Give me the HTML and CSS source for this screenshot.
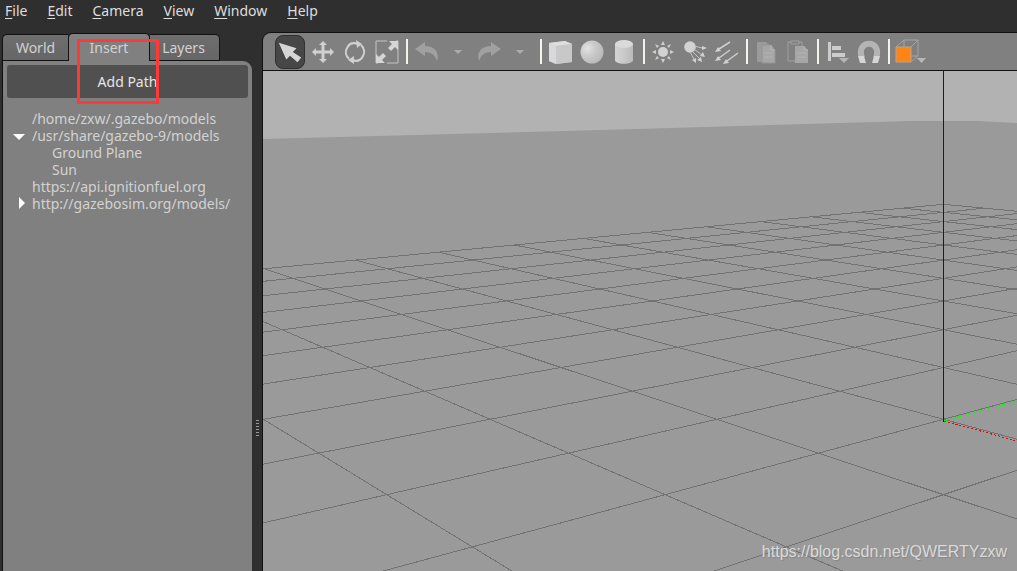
FILE: index.html
```html
<!DOCTYPE html>
<html lang="en">
<head>
<meta charset="utf-8">
<title>Gazebo</title>
<link rel="stylesheet" href="styles.css">
</head>
<body>
<nav class="menubar">
  <button><u>F</u>ile</button>
  <button><u>E</u>dit</button>
  <button><u>C</u>amera</button>
  <button><u>V</u>iew</button>
  <button><u>W</u>indow</button>
  <button><u>H</u>elp</button>
</nav>
<div class="workspace">
  <aside class="sidebar">
    <div class="tabs" role="tablist">
      <button class="tab tab-world" role="tab">World</button>
      <button class="tab tab-active" role="tab" aria-selected="true">Insert</button>
      <button class="tab tab-layers" role="tab">Layers</button>
    </div>
    <div class="panel">
      <button class="add-path">Add Path</button>
      <ul class="tree">
        <li>/home/zxw/.gazebo/models</li>
        <li class="open">/usr/share/gazebo-9/models
          <ul>
            <li>Ground Plane</li>
            <li>Sun</li>
          </ul>
        </li>
        <li>https://api.ignitionfuel.org</li>
        <li class="closed">http://gazebosim.org/models/</li>
      </ul>
    </div>
    <div class="highlight"></div>
  </aside>
  <div class="splitter"><span class="grip"></span></div>
  <main class="view">
    <div class="toolbar">
      <button class="tool selected" aria-label="Select"><svg viewBox="0 0 30 34"><path d="M3 7 22 13 18 17 27 23 23 28 15 21 11 25Z" fill="#d6d6d6"/></svg></button>
      <button class="tool" aria-label="Translate"><svg viewBox="0 0 24 24"><path d="M12 1 16 5H13.500V10.500H19V8L23 12 19 16V13.500H13.500V19H16L12 23 8 19H10.500V13.500H5V16L1 12 5 8V10.500H10.500V5H8Z" fill="#d0d0d0"/></svg></button>
      <button class="tool" aria-label="Rotate"><svg viewBox="0 0 24 24"><path d="M6 19A9 9 0 0 1 4 8C6 4 10 2 15 4M18 5A9 9 0 0 1 20 16C18 20 14 22 9 20" fill="none" stroke="#d0d0d0" stroke-width="2"/><path d="M13 0 19 4 14 8ZM11 16 5 20 11 24Z" fill="#d0d0d0"/></svg></button>
      <button class="tool" aria-label="Scale"><svg viewBox="0 0 24 24"><path d="M12 1H1V12M12 23H23V12M1 12V23H3M23 12V1H21" fill="none" stroke="#c4c4c4"/><path d="M14 1H23V10L20 7 16 11 13 8 17 4ZM1 14 4 17 8 13 11 16 7 20 10 23H1Z" fill="#d6d6d6"/></svg></button>
      <span class="sep"></span>
      <div class="history">
        <button class="tool" aria-label="Undo"><svg viewBox="0 0 24 24"><path d="M0 9 10 2V6C19 6 25 12 22 21C20 15 16 12 10 12V16Z" fill="#a0a0a0"/></svg></button>
        <button class="tool drop" aria-label="Undo history"><svg viewBox="0 0 24 24"><path d="M8 10H16L12 14Z" fill="#ababab"/></svg></button>
        <button class="tool" aria-label="Redo"><svg viewBox="0 0 24 24"><path d="M24 9 14 2V6C5 6-1 12 2 21C4 15 8 12 14 12V16Z" fill="#a0a0a0"/></svg></button>
        <button class="tool drop" aria-label="Redo history"><svg viewBox="0 0 24 24"><path d="M8 10H16L12 14Z" fill="#ababab"/></svg></button>
      </div>
      <span class="sep"></span>
      <button class="tool" aria-label="Box"><svg viewBox="0 0 24 24"><path d="M1 3 17 1 24 4V22L8 24 1 21Z" fill="#d0d0d0"/><path d="M1 3 17 1 24 4 8 6Z" fill="#dedee0"/><path d="M1 3 8 6V24L1 21Z" fill="#d9d9dc"/><path d="M8 6 24 4V22L8 24Z" fill="#c8c8c8"/></svg></button>
      <button class="tool" aria-label="Sphere"><svg viewBox="0 0 24 24"><defs><radialGradient id="ball" cx=".3" cy=".35" r=".7"><stop offset="0" stop-color="#e2e2e2"/><stop offset=".5" stop-color="#cacaca"/><stop offset="1" stop-color="#bababa"/></radialGradient></defs><circle cx="12" cy="12" r="11.500" fill="url(#ball)"/></svg></button>
      <button class="tool" aria-label="Cylinder"><svg viewBox="0 0 24 24"><defs><linearGradient id="tube"><stop offset="0" stop-color="#d4d4d4"/><stop offset=".4" stop-color="#ccc"/><stop offset="1" stop-color="#bababa"/></linearGradient></defs><path d="M3 4V20C3 25 21 25 21 20V4Z" fill="url(#tube)"/><ellipse cx="12" cy="4" rx="9" ry="4" fill="#dadadc"/></svg></button>
      <span class="sep"></span>
      <button class="tool" aria-label="Point light"><svg viewBox="0 0 24 24"><circle cx="12" cy="12" r="5" fill="#d2d2d2"/><path d="M12 1 14 5H10ZM12 23 14 19H10ZM1 12 5 10V14ZM23 12 19 10V14ZM4 4 8 6 6 8ZM20 20 16 18 18 16ZM4 20 6 16 8 18ZM20 4 16 6 18 8Z" fill="#d0d0d0"/></svg></button>
      <button class="tool" aria-label="Spot light"><svg viewBox="0 0 24 24"><circle cx="7" cy="7" r="5.800" fill="#d2d2d2"/><path d="M11 6 19 8M11 9 19 15M9 11 16 18M7 12 11 19" stroke="#c4c4c4"/><path d="M24 8 19 6V10ZM22 17 20 12 17 16ZM19 22 18 17 14 20ZM13 23 13 18 9 20Z" fill="#d0d0d0"/></svg></button>
      <button class="tool" aria-label="Directional light"><svg viewBox="0 0 24 24"><path d="M15 2 4 9M15 10 4 18M23 13 12 21" stroke="#cecece" stroke-width="1.500"/><path d="M0 12 3 7 6 11ZM0 21 3 16 6 20ZM8 24 11 19 14 23Z" fill="#d0d0d0"/></svg></button>
      <span class="sep"></span>
      <button class="tool" aria-label="Copy"><svg viewBox="0 0 24 24"><path d="M3 2H12L16 6V22H3Z" fill="#9b9b9b"/><path d="M8 5H17L21 10V23H8Z" fill="#a6a6a6" stroke="#949494"/><path d="M17 5V10H21M10 13H19M10 17H19" stroke="#b4b4b4" fill="none"/></svg></button>
      <button class="tool" aria-label="Paste"><svg viewBox="0 0 24 24"><path d="M5 2H2V21H9M13 2H16V6M5 1H13V4H5Z" fill="none" stroke="#a0a0a0"/><path d="M9 6H18L22 10V23H9Z" fill="#a6a6a6"/><path d="M18 6V10H22M11 13H20M11 17H20" stroke="#b2b2b2" fill="none"/></svg></button>
      <span class="sep"></span>
      <button class="tool" aria-label="Align"><svg viewBox="0 0 24 24"><path d="M3 2H6V21H3ZM7 6H16V10H7ZM7 13H20V17H7Z" fill="#ccc"/><path d="M14 18H24L19 23Z" fill="#b5b5b5"/></svg></button>
      <button class="tool" aria-label="Snap"><svg viewBox="0 0 24 24"><path d="M5 18C-2-1 26-1 19 18" fill="none" stroke="#b4b4b4" stroke-width="6"/><path d="M1 16H7L9 23H3ZM17 16H23L21 23H15Z" fill="#d5d5d5"/></svg></button>
      <span class="sep"></span>
      <button class="tool wide" aria-label="View angle"><svg viewBox="0 0 32 26"><path d="M1 8 9 1H23V17L16 23M16 8 23 1M9 1V8M16 17H23" fill="none" stroke="#a4a4a4"/><path d="M1 8H16V23H1Z" fill="#ff8416" stroke="#b9a48f"/><path d="M22 19H31L26.500 24Z" fill="#b8b8b8"/></svg></button>
    </div>
    <div class="scene">
      <svg class="world" viewBox="263 71 754 500" preserveAspectRatio="xMinYMin slice" aria-label="3D world">
        <rect x="263" y="71" width="1600" height="1600" fill="#b2b2b2"/>
        <path d="M263 139 637 129 910 121H977L1017 123 1863 150V1671H263Z" fill="#9a9a9a"/>
        <g id="grid" stroke="#727272" shape-rendering="crispEdges"></g>
        <g shape-rendering="crispEdges" fill="none">
          <path d="M943.500 71V422" stroke="#00f"/>
          <path d="M944 421 1017 401" stroke="#0f0" stroke-dasharray="3 2"/>
          <path d="M944 421 1017 441" stroke="#f00" stroke-dasharray="2 2"/>
        </g>
      </svg>
      <span class="watermark">https://blog.csdn.net/QWERTYzxw</span>
    </div>
  </main>
</div>
<script src="grid.js"></script>
</body>
</html>
```

FILE: styles.css
```css
* { box-sizing: border-box; }
body {
  margin: 0;
  height: 100vh;
  display: flex;
  flex-direction: column;
  overflow: hidden;
  background: #2f2f2f;
  color: #d2d2d2;
  font: 14px/17px "Noto Sans", "Open Sans", sans-serif;
}
button {
  margin: 0;
  padding: 0;
  border: 0;
  background: none;
  color: inherit;
  font: inherit;
}
.menubar {
  display: flex;
  gap: 20px;
  padding: 2px 5px;
  height: 33px;
  align-items: flex-start;
  color: #dedede;
}
.menubar u { text-underline-offset: 2px; }
.workspace { flex: 1; display: flex; min-height: 0; }
.sidebar {
  position: relative;
  width: 252px;
  padding-left: 2px;
  display: flex;
  flex-direction: column;
}
.tabs { display: flex; align-items: flex-end; height: 28px; }
.tab {
  height: 27px;
  border: 1px solid #111;
  border-radius: 5px 5px 0 0;
  background: linear-gradient(#6e6e6e, #666);
}
.tab-world { width: 66px; border-right: 0; border-top-right-radius: 0; }
.tab-layers { width: 70px; padding-right: 2px; border-left: 0; border-top-left-radius: 0; }
.tab-active {
  width: 82px;
  height: 28px;
  padding-bottom: 1px;
  border-bottom: 0;
  background: #808080;
}
.panel {
  flex: 1;
  padding: 4px;
  border-left: 1px solid #111;
  border-radius: 0 9px 0 0;
  background: #808080;
}
.add-path {
  display: block;
  width: 100%;
  height: 33px;
  border-radius: 3px;
  background: #505050;
  color: #e6e6e6;
}
.tree, .tree ul { margin: 0; padding: 0; list-style: none; }
.tree { padding: 12px 0 0 25px; white-space: nowrap; }
.tree ul { padding-left: 20px; }
.tree li { position: relative; }
.open::before, .closed::before {
  content: "";
  position: absolute;
  border: 6px solid transparent;
}
.open::before { left: -19px; top: 7px; border-top-color: #fff; border-bottom: 0; }
.closed::before { left: -13px; top: 2px; border-left-color: #fff; border-right: 0; }
.highlight {
  position: absolute;
  left: 77px;
  top: 6px;
  width: 82px;
  height: 65px;
  border: 3px solid #ff3838;
  pointer-events: none;
}
.splitter { width: 10px; display: flex; justify-content: center; padding-top: 387px; }
.grip { width: 3px; height: 18px; background: repeating-linear-gradient(#999 0 1px, #2f2f2f 1px 3px); }
.view {
  flex: 1;
  min-width: 0;
  display: flex;
  flex-direction: column;
  border: 1px solid #111;
  border-width: 1px 0 0 1px;
  border-radius: 9px 0 0 0;
  overflow: hidden;
  margin-top: -1px;
}
.toolbar {
  height: 38px;
  flex: none;
  display: flex;
  align-items: center;
  padding-left: 12px;
  border-bottom: 1px solid #111;
  background: #808080;
}
.tool { width: 32px; height: 34px; flex: none; display: grid; place-items: center; }
.tool svg { width: 24px; height: 24px; }
.selected { width: 30px; margin-right: 2px; border: 1px solid #303030; border-radius: 8px; background: #474747; }
.selected svg { width: 28px; height: 32px; }
.drop { width: 30px; }
.wide { width: 38px; }
.wide svg { width: 32px; height: 26px; }
.history { display: flex; padding: 0 2px 0 1px; }
.sep { width: 7px; height: 25px; flex: none; border: solid #808080; border-width: 0 2px 0 3px; background: #f4f2ec; }
.scene { position: relative; flex: 1; min-height: 0; background: #9a9a9a; }
.world { display: block; width: 100%; height: 100%; }
.watermark {
  position: absolute;
  right: 10px;
  bottom: 10px;
  font: 16px/18px "Liberation Sans", Arial, sans-serif;
  color: #dadada;
  text-shadow: 1px 1px 1px #858585;
}
```

FILE: grid.js
```js
// Ground grid, 20 x 20 cells, seen corner-on in perspective.
const SIZE = 20;
const camera = { x: 943.5, horizon: 88.4, distance: 15.39, rise: 1783.5, spread: 1222 };

function project(a, b) {
  const depth = camera.distance - (a + b) / 2;
  return {
    x: camera.x + camera.spread * (a - b) / 2 / depth,
    y: camera.horizon + camera.rise / depth
  };
}

function addLine(group, p, q) {
  const line = document.createElementNS("http://www.w3.org/2000/svg", "line");
  line.setAttribute("x1", p.x);
  line.setAttribute("y1", p.y);
  line.setAttribute("x2", q.x);
  line.setAttribute("y2", q.y);
  group.appendChild(line);
}

const grid = document.getElementById("grid");
for (let i = 0; i <= SIZE; i++) {
  const end = Math.min(SIZE, 29 - i);
  addLine(grid, project(i, 0), project(i, end));
  addLine(grid, project(0, i), project(end, i));
}
```
